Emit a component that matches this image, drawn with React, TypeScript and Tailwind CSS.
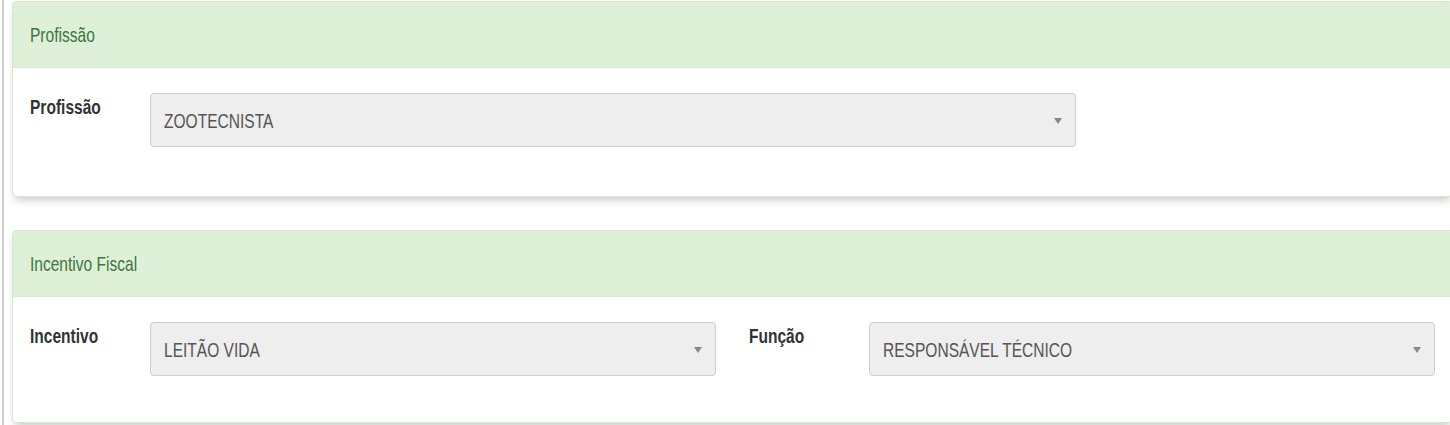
import type { ReactNode } from "react";

function T({ children }: { children: ReactNode }) {
    return <span className="inline-block origin-left scale-x-[0.74] whitespace-nowrap">{children}</span>
}

function Select({ value, width }: { value: string; width: string }) {
    return (
        <div className={`flex items-center h-[54px] ${width} pl-[13px] bg-[#eeeeee] border border-[#cccccc] rounded-[4px] text-[#555555] text-[21px] leading-[25px]`}>
            <T>{value}</T>
            <span className="ml-auto mr-[13px] mt-[1px] h-0 w-0 border-x-[4px] border-t-[6px] border-x-transparent border-t-[#888888]" />
        </div>
    )
}

function Label({ text }: { text: string }) {
    return (
        <div className="w-[120px] shrink-0 text-[21px] leading-[25px] font-bold text-[#333333] pt-[1px]">
            <T>{text}</T>
        </div>
    )
}

function Panel({ title, children, className, bodyClass }: { title: string; children: ReactNode; className?: string; bodyClass: string }) {
    return (
        <div className={`-mr-[3px] bg-white border border-[#d6e9c6] rounded-[4px] shadow-[0_6px_8px_-3px_rgba(0,0,0,0.22)] ${className ?? ""}`}>
            <div className="flex items-center h-[66px] px-[17px] bg-[#dff0d8] border-b border-[#d6e9c6] rounded-t-[3px] text-[#3c763d] text-[21px] leading-[25px]">
                <T>{title}</T>
            </div>
            <div className={`flex items-start px-[17px] pt-[25px] ${bodyClass}`}>{children}</div>
        </div>
    )
}

export default function App() {
    return (
        <div className="flex h-[425px] w-[1450px] overflow-hidden bg-white font-['Liberation_Sans',Arial,sans-serif]">
            <div className="w-[2px] shrink-0" />
            <div className="w-[2px] shrink-0 bg-[#cfcfcf]" />
            <div className="w-[8px] shrink-0" />

            <div className="grow pt-px">
                <Panel title="Profissão" bodyClass="pb-[49px]">
                    <Label text="Profissão" />
                    <Select value="ZOOTECNISTA" width="w-[926px]" />
                </Panel>

                <Panel title="Incentivo Fiscal" className="mt-[33px]" bodyClass="pb-[46px]">
                    <Label text="Incentivo" />
                    <Select value="LEITÃO VIDA" width="w-[566px]" />
                    <div className="w-[33px] shrink-0" />
                    <Label text="Função" />
                    <Select value="RESPONSÁVEL TÉCNICO" width="w-[566px]" />
                </Panel>
            </div>
        </div>
    )
}
